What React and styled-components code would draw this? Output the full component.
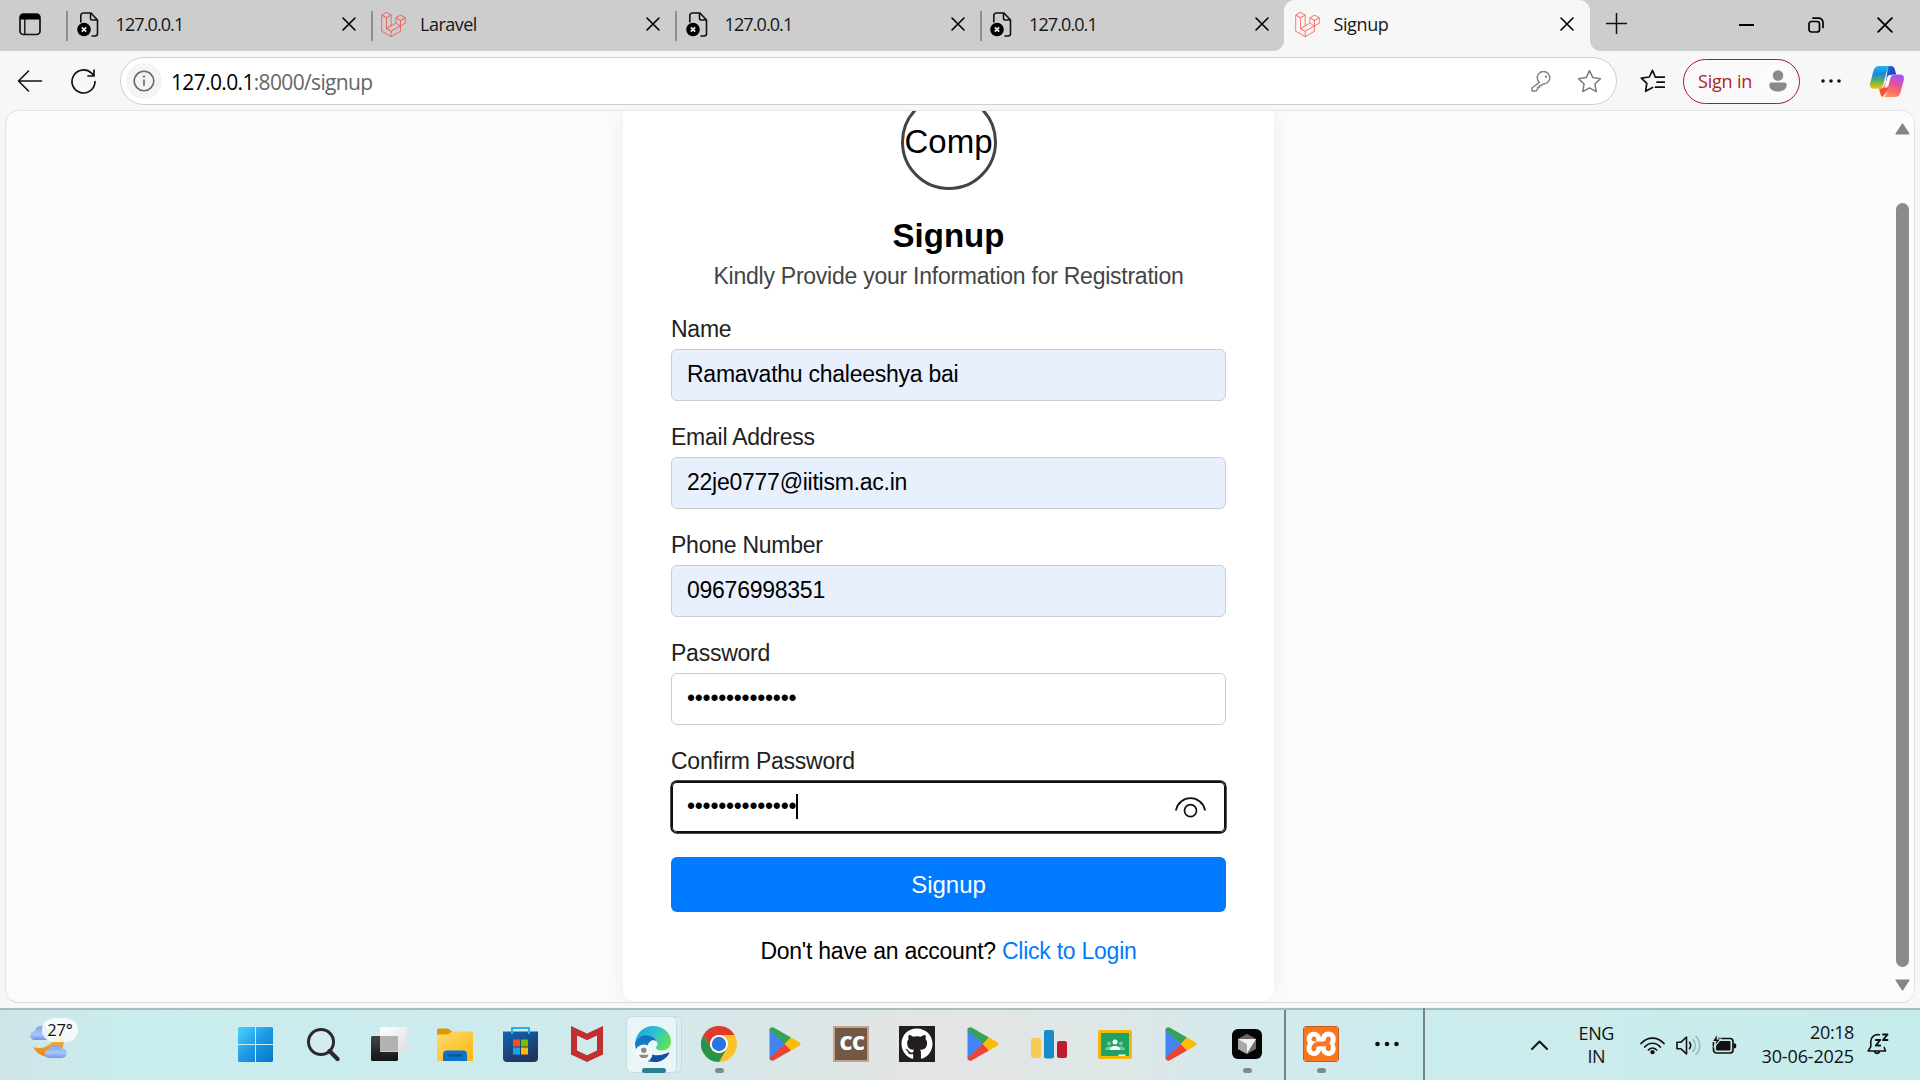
import React from "react";
import styled, { createGlobalStyle, css } from "styled-components";
import { SiLaravel, SiXampp } from "react-icons/si";
import { FaGithub } from "react-icons/fa";

const GlobalStyle = createGlobalStyle`
  *, *::before, *::after { box-sizing: border-box; }
  body { margin: 0; background: #f7f7f7; overflow: hidden; }
  svg { display: block; flex: none; }
`;

const systemFont = css`
  font-family: "Open Sans", "Noto Sans", sans-serif;
`;

const Screen = styled.div`
  width: 1920px;
  height: 1080px;
  display: flex;
  flex-direction: column;
  overflow: hidden;
  ${systemFont}
`;

/* ---------- Tab strip ---------- */

const TabStrip = styled.div`
  height: 51px;
  flex: none;
  display: flex;
  background: #cdcdcd;
`;

const TabActions = styled.div`
  width: 66px;
  padding: 13px 0 0 19px;
`;

const Tab = styled.div`
  width: 304.5px;
  height: 51px;
  display: flex;
  align-items: center;
  padding: 0 15px 3px 10.5px;
  position: relative;
  &::before {
    content: "";
    position: absolute;
    left: 0;
    top: 11px;
    width: 2px;
    height: 30px;
    background: #8f8f8f;
  }
`;

const ActiveTab = styled(Tab)`
  width: 306px;
  background: #f7f7f7;
  border-radius: 11px 11px 0 0;
  padding-right: 16px;
  &::before {
    left: -10px;
    top: 41px;
    width: 10px;
    height: 10px;
    background: radial-gradient(circle at 0 0, #cdcdcd 9.5px, #f7f7f7 10px);
  }
  &::after {
    content: "";
    position: absolute;
    right: -10px;
    top: 41px;
    width: 10px;
    height: 10px;
    background: radial-gradient(circle at 100% 0, #cdcdcd 9.5px, #f7f7f7 10px);
  }
`;

const TabIcon = styled.span`
  width: 26px;
  color: ${(p) => p.$color || "#111"};
`;

const TabTitle = styled.span`
  flex: 1;
  margin-left: 13px;
  font-size: 18px;
  line-height: 24px;
  letter-spacing: ${(p) => p.$spacing || "-0.9px"};
  color: #161616;
`;

const NewTab = styled.div`
  margin-left: 15.5px;
  padding-top: 13px;
`;

const WindowControls = styled.div`
  margin-left: auto;
  margin-right: 1px;
  display: flex;
  align-items: center;
  height: 50px;
`;

const ControlButton = styled.div`
  width: 69px;
  display: flex;
  justify-content: center;
`;

/* ---------- Toolbar ---------- */

const Toolbar = styled.div`
  height: 59px;
  flex: none;
  display: flex;
  align-items: center;
  padding: 1px 0 0 17px;
  background: #f7f7f7;
`;

const ReloadSlot = styled.div`
  margin: 0 24.5px 0 27.5px;
`;

const AddressBar = styled.div`
  width: 1497px;
  height: 48px;
  flex: none;
  display: flex;
  align-items: center;
  padding: 0 14px 0 5px;
  border: 1.5px solid #cecece;
  border-radius: 24px;
  background: #fff;
`;

const SiteInfo = styled.div`
  width: 36px;
  height: 36px;
  border-radius: 50%;
  background: #f4f4f4;
  display: flex;
  align-items: center;
  justify-content: center;
`;

const Url = styled.div`
  flex: 1;
  margin-left: 9px;
  padding-top: 1px;
  font-size: 21px;
  line-height: 28px;
  letter-spacing: -0.65px;
  color: #666;
`;

const UrlHost = styled.span`
  color: #000;
`;

const StarSlot = styled.div`
  margin-left: 25px;
`;

const CollectionsSlot = styled.div`
  margin: 0 18px 0 23px;
`;

const SignIn = styled.div`
  width: 117px;
  height: 45px;
  flex: none;
  display: flex;
  align-items: center;
  padding-left: 14px;
  border: 1.5px solid #a91b22;
  border-radius: 23px;
  background: #f9f9f9;
`;

const SignInText = styled.span`
  width: 63px;
  font-size: 18px;
  line-height: 24px;
  letter-spacing: -0.2px;
  color: #ab1f26;
`;

const Avatar = styled.div`
  width: 34px;
  height: 34px;
  border-radius: 50%;
  background: #fbfbfb;
  display: flex;
  align-items: center;
  justify-content: center;
`;

const MoreSlot = styled.div`
  margin: 0 29px 0 20.5px;
`;

/* ---------- Web page ---------- */

const Frame = styled.div`
  height: 898px;
  flex: none;
  padding: 0 5px 5px 5px;
  background: #f7f7f7;
`;

const Page = styled.div`
  height: 893px;
  display: flex;
  justify-content: space-between;
  overflow: hidden;
  border: 1px solid #e3e4e5;
  border-bottom: 1.5px solid #dadbdc;
  border-radius: 14px;
  background: #fafbfd;
`;

const PageBody = styled.div`
  flex: 1;
  padding-left: 617px;
  display: flex;
`;

const Card = styled.div`
  width: 651px;
  height: 890px;
  padding: 0 48px;
  background: #fff;
  border-radius: 0 0 12px 12px;
  box-shadow: 0 0 22px rgba(0, 0, 0, 0.06);
  display: flex;
  flex-direction: column;
  align-items: stretch;
  font-family: "Liberation Sans", Arial, sans-serif;
  color: #000;
`;

const bodyText = css`
  font-size: 23px;
  line-height: 26px;
  letter-spacing: -0.25px;
`;

const Logo = styled.div`
  align-self: center;
  width: 96px;
  height: 96px;
  margin-top: -17px;
  flex: none;
  border: 3px solid #444;
  border-radius: 50%;
  display: flex;
  align-items: center;
  justify-content: center;
  font-size: 33px;
  line-height: 38px;
`;

const Title = styled.h1`
  margin: 27px 0 0;
  font-size: 33px;
  line-height: 38px;
  font-weight: 700;
  text-align: center;
`;

const Subtitle = styled.p`
  margin: 8px 0 0;
  ${bodyText}
  text-align: center;
  color: #444;
`;

const Field = styled.div`
  display: flex;
  flex-direction: column;
  margin-top: ${(p) => (p.$first ? "27px" : "23px")};
`;

const Label = styled.label`
  ${bodyText}
  margin-bottom: 7px;
  color: #222;
`;

const Input = styled.div`
  height: 52px;
  display: flex;
  align-items: center;
  padding: 0 19px 3px 15px;
  border: 1px solid #ccc;
  border-radius: 6px;
  background: ${(p) => (p.$filled ? "#e8f0fe" : "#fff")};
  ${bodyText}
  ${(p) =>
    p.$focused &&
    css`
      border-color: #101010;
      box-shadow: 0 0 0 0.7px #101010, inset 0 0 0 1px #101010;
    `}
`;

const Caret = styled.span`
  width: 2px;
  height: 25px;
  margin-top: 2px;
  background: #000;
`;

const RevealButton = styled.span`
  margin-left: auto;
  padding-top: 4px;
`;

const SubmitButton = styled.div`
  height: 55px;
  flex: none;
  margin-top: 24px;
  padding-top: 1px;
  display: flex;
  align-items: center;
  justify-content: center;
  border-radius: 6px;
  background: #007bff;
  color: #fff;
  font-size: 24px;
  line-height: 28px;
`;

const Footnote = styled.p`
  margin: 26px 0 0;
  ${bodyText}
  text-align: center;
`;

const LoginLink = styled.a`
  color: #007bff;
`;

const Scrollbar = styled.div`
  width: 23px;
  display: flex;
  flex-direction: column;
  align-items: center;
  padding: 12px 0 0 0;
  background: #fcfcfd;
`;

const Thumb = styled.div`
  width: 13px;
  height: 764px;
  flex: none;
  margin: 68px 0 12px;
  border-radius: 7px;
  background: #8b8b8b;
`;

/* ---------- Taskbar ---------- */

const Taskbar = styled.div`
  height: 72px;
  flex: none;
  display: flex;
  border-top: 2px solid #a9bcbc;
  background: linear-gradient(
    90deg,
    #cfe4e8 0,
    #c9edee 130px,
    #ccebed 480px,
    #d6e8ea 700px,
    #e3e5e3 930px,
    #dfe7e7 1110px,
    #d4e9ec 1230px,
    #cbecee 1420px,
    #cbebed 1600px,
    #c7ecec 1900px
  );
`;

const Weather = styled.div`
  width: 222.5px;
  flex: none;
  padding: 7px 0 0 29px;
  position: relative;
`;

const Temperature = styled.div`
  position: absolute;
  left: 42px;
  top: 8px;
  width: 36px;
  height: 24px;
  border-radius: 12px;
  background: rgba(250, 252, 253, 0.85);
  font-size: 16.5px;
  line-height: 23px;
  letter-spacing: -0.2px;
  text-align: center;
  color: #111;
`;

const Slot = styled.div`
  width: 66.05px;
  height: 70px;
  flex: none;
  display: flex;
  align-items: center;
  justify-content: center;
  padding-bottom: 2px;
  position: relative;
`;

const ActiveSlot = styled(Slot)`
  &::before,
  &::after {
    content: "";
    position: absolute;
    top: 6px;
    height: 57px;
    border: 1px solid #c5dcdf;
    border-radius: 6px;
  }
  &::before {
    left: 21px;
    width: 41px;
    background: #dcecee;
  }
  &::after {
    left: 6px;
    width: 51px;
    background: #e9f5f6;
  }
  svg {
    position: relative;
    z-index: 1;
  }
`;

const Indicator = styled.span`
  position: absolute;
  z-index: 2;
  left: ${(p) => (p.$active ? "22px" : "29px")};
  top: 58px;
  width: ${(p) => (p.$active ? "24px" : "9px")};
  height: 5px;
  border-radius: 3px;
  background: ${(p) => (p.$active ? "#268292" : "#7f8a8b")};
`;

const AppSlots = styled.div`
  display: flex;
  padding-left: 1px;
`;

const Divider = styled.div`
  width: 2px;
  height: 72px;
  flex: none;
  margin: ${(p) => (p.$raised ? "-2px 0 0 3px" : "0 2px 0 4px")};
  background: #778485;
`;

const CodeChef = styled.div`
  width: 36px;
  height: 36px;
  border: 2px solid #c3a48d;
  background: #725845;
  display: flex;
  align-items: center;
  justify-content: center;
  padding: 0 0 2px 2px;
  color: #fff;
  font: 800 20px/24px "Open Sans", sans-serif;
  letter-spacing: -0.5px;
`;

const Tray = styled.div`
  flex: 1;
  display: flex;
  align-items: center;
  padding: 0 31px 0 106px;
  color: #111;
`;

const Language = styled.div`
  width: 40px;
  margin-left: 28px;
  font-size: 18px;
  line-height: 23px;
  letter-spacing: -0.4px;
  text-align: center;
`;

const TrayIcons = styled.div`
  display: flex;
  align-items: center;
  gap: 11px;
  margin-left: 24px;
`;

const Clock = styled.div`
  margin-left: auto;
  margin-right: 13px;
  padding-bottom: 2px;
  display: flex;
  flex-direction: column;
  align-items: flex-end;
  font-size: 18px;
  line-height: 24px;
  letter-spacing: -0.15px;
`;

const ClockTime = styled.span`
  letter-spacing: -0.4px;
`;

/* ---------- Icons ---------- */

const line = { fill: "none", stroke: "currentColor", strokeLinecap: "round", strokeLinejoin: "round" };

const Cross = ({ size = 14, width = 1.6 }) => (
  <svg width={size} height={size} viewBox="0 0 14 14" {...line} strokeWidth={width}>
    <path d="M1 1l12 12M13 1L1 13" />
  </svg>
);

const TabActionsIcon = () => (
  <svg width="22" height="23" viewBox="0 0 22 23">
    <rect x="1" y="1" width="20" height="20.5" rx="3.5" fill="none" stroke="#111" strokeWidth="1.7" />
    <path d="M1 6.500V4.500A3.500 3.500 0 0 1 4.500 1h13A3.500 3.500 0 0 1 21 4.500V6.500z" fill="#000" />
    <path d="M5.800 6v15" stroke="#111" strokeWidth="1.400" />
  </svg>
);

const BrokenPageIcon = () => (
  <svg width="22" height="25" viewBox="0 0 22 25">
    <path d="M3.800 10.500V3.500A2.500 2.500 0 0 1 6.300 1H14l6.500 7v13.500a2.500 2.500 0 0 1-2.500 2.500H14.500M13.500 1v5.500A1.500 1.500 0 0 0 15 8h5.500" fill="none" stroke="#111" strokeWidth="1.600" strokeLinejoin="round" />
    <circle cx="7" cy="17.500" r="6.800" fill="#000" />
    <path d="M4.800 15.300l4.400 4.400M9.200 15.300l-4.400 4.400" stroke="#eee" strokeWidth="1.700" />
  </svg>
);

const PlusIcon = () => (
  <svg width="21" height="21" viewBox="0 0 21 21" fill="none" stroke="#111" strokeWidth="1.500">
    <path d="M10.500 0v21M0 10.500h21" />
  </svg>
);

const RestoreIcon = () => (
  <svg width="16" height="16" viewBox="0 0 16 16" fill="none" stroke="#000" strokeWidth="1.700" strokeLinecap="round">
    <rect x="1" y="4.500" width="10.500" height="10.500" rx="2.500" />
    <path d="M5 1.200h5.500A4.300 4.300 0 0 1 15 5.500V10.500" />
  </svg>
);

const BackIcon = () => (
  <svg width="26" height="22" viewBox="0 0 26 22" {...line} strokeWidth="1.600" color="#111">
    <path d="M11.500 1L1.500 11l10 10M1.500 11H24.500" />
  </svg>
);

const ReloadIcon = () => (
  <svg width="25" height="25" viewBox="0 0 25 25" {...line} strokeWidth="1.700" color="#111">
    <path d="M24 12.500a11.500 11.500 0 1 1-3.500-8.300L23 6.700M23 1v6H17" />
  </svg>
);

const InfoIcon = () => (
  <svg width="22" height="22" viewBox="0 0 22 22" fill="none" stroke="#6a6a6a" strokeWidth="1.600">
    <circle cx="11" cy="11" r="9.800" />
    <path d="M11 9.500v6.500" />
    <circle cx="11" cy="6.700" r="1.100" fill="#6a6a6a" stroke="none" />
  </svg>
);

const KeyIcon = () => (
  <svg width="21" height="21" viewBox="0 0 21 21" {...line} strokeWidth="1.500" color="#858585">
    <path d="M8.300 11.400A6.300 6.300 0 1 1 12 13l-1.500 1.500H8.500v2H6.500v2L5 20H1v-3z" />
    <circle cx="15" cy="5.800" r="1.200" fill="#858585" stroke="none" />
  </svg>
);

const StarIcon = () => (
  <svg width="25" height="24" viewBox="0 0 24 23" {...line} strokeWidth="1.400" color="#7b7b7b">
    <path d="M12 1.500l3.200 6.700 7.300 1-5.300 5.100 1.300 7.300L12 18.100l-6.500 3.500 1.300-7.300L1.500 9.200l7.300-1z" />
  </svg>
);

const CollectionsIcon = () => (
  <svg width="25" height="24" viewBox="0 0 25 24" {...line} strokeWidth="1.700" color="#111">
    <path d="M16 8.300L15.300 8 12.500 1.300 9.300 8l-8 1.100 5.500 5.200-1.200 8 7-3.800M15.500 8.200h9M17 13.200h7.500M15.500 18.200h9" />
  </svg>
);

const PersonIcon = () => (
  <svg width="18" height="22" viewBox="0 0 18 22" fill="#8a8a8a">
    <circle cx="9" cy="5.500" r="5.300" />
    <path d="M2.500 12.500h13a2.200 2.200 0 0 1 2.200 2.200C17.700 19 14 21.500 9 21.500S.3 19 .3 14.700a2.200 2.200 0 0 1 2.200-2.200z" />
  </svg>
);

const DotsIcon = ({ size = 20, r = 1.8 }) => (
  <svg width={size} height="6" viewBox={`0 0 ${size} 6`} fill="#111">
    <circle cx={r + 0.2} cy="3" r={r} />
    <circle cx={size / 2} cy="3" r={r} />
    <circle cx={size - r - 0.2} cy="3" r={r} />
  </svg>
);

const CopilotIcon = () => (
  <svg width="34" height="31" viewBox="0 0 34 31">
    <defs>
      <linearGradient id="cpA" x1="0" y1="0" x2="0" y2="1">
        <stop offset="0" stopColor="#20b6f2" />
        <stop offset=".35" stopColor="#1c87da" />
        <stop offset=".65" stopColor="#5bb45b" />
        <stop offset="1" stopColor="#f4c30b" />
      </linearGradient>
      <linearGradient id="cpB" x1="0.6" y1="0" x2="0.3" y2="1">
        <stop offset="0" stopColor="#a552f4" />
        <stop offset=".4" stopColor="#e0549c" />
        <stop offset=".75" stopColor="#fb6f61" />
        <stop offset="1" stopColor="#ff9a52" />
      </linearGradient>
      <linearGradient id="cpC" x1="0" y1="0" x2="1" y2="1">
        <stop offset="0" stopColor="#1d70de" />
        <stop offset="1" stopColor="#1d2fae" />
      </linearGradient>
    </defs>
    <path d="M18 0h3c2.300 0 3.200 1.500 3.800 3.500L26.300 8.500H24c-3 0-4.500 1-5.300 3.500L16 16z" fill="url(#cpC)" />
    <path d="M12.500 31c-1.500-1-2-2.500-2.500-4.500L9 22.500h1c3 0 4-1.500 4.800-4L18 12v12z" fill="#f2553c" />
    <path d="M9 0H21c-2.300 0-3.200 1.500-3.900 4l-3.600 14c-.7 2.800-2 4.800-4.700 4.800H4c-3.500 0-4.600-2.500-3.700-6L3.500 4.500C4.500 1.500 6.300 0 9 0z" fill="url(#cpA)" />
    <path d="M25 31H12.500c2.300 0 3.200-1.500 3.900-4l3.800-14c.7-2.800 2-4.500 4.700-4.500H30c3.500 0 4.600 2.500 3.700 6L30.500 26.500c-1 3-2.800 4.500-5.500 4.500z" fill="url(#cpB)" />
    <path d="M18.700 9.300h2.800c-1 .8-1.500 2-1.900 3.700l-2.300 8.500h-3c.6-.8.900-2 1.200-3.200l1.500-6c.4-1.500.9-2.400 1.700-3z" fill="#fff" />
  </svg>
);

const EyeIcon = () => (
  <svg width="31" height="21" viewBox="0 0 31 21" {...line} strokeWidth="1.700" color="#111">
    <path d="M1 13C2.500 6 8.500 1.200 15.500 1.200S28.500 6 30 13" />
    <circle cx="15.500" cy="13.700" r="6" />
  </svg>
);

const ArrowIcon = ({ down }) => (
  <svg width="15" height="12" viewBox="0 0 15 12" fill="#858585" stroke="#858585" strokeWidth="1.500" strokeLinejoin="round">
    <path d={down ? "M1.200 1.200h12.600L7.500 10.800z" : "M1.200 10.800h12.600L7.500 1.200z"} />
  </svg>
);

const WeatherIcon = () => (
  <svg width="42" height="44" viewBox="0 0 42 44">
    <defs>
      <linearGradient id="moon" x1="0" y1="0" x2="0" y2="1">
        <stop offset="0" stopColor="#ffd27a" />
        <stop offset=".6" stopColor="#f0a030" />
        <stop offset="1" stopColor="#ee7d1c" />
      </linearGradient>
      <linearGradient id="cloud" x1="0" y1="0" x2="0" y2="1">
        <stop offset="0" stopColor="#7ea5f0" />
        <stop offset=".6" stopColor="#a9c6fa" />
        <stop offset="1" stopColor="#6f97e8" />
      </linearGradient>
    </defs>
    <path d="M28 10c7 5 9 14 5 22-6 9.500-22 11.500-29 -2 12 4 24-4 24-20z" fill="url(#moon)" />
    <path d="M5.500 23a4.300 4.300 0 0 1 0-8.600 7.300 7.300 0 0 1 13.500-2v10.600z" fill="url(#cloud)" />
    <path d="M20 41a4.300 4.300 0 0 1 0-8.600 7.300 7.300 0 0 1 13-1A4.800 4.800 0 0 1 33 41z" fill="url(#cloud)" />
  </svg>
);

const WindowsIcon = () => (
  <svg width="35" height="35" viewBox="0 0 35 35">
    <defs>
      <linearGradient id="win" gradientUnits="userSpaceOnUse" x1="0" y1="0" x2="35" y2="35">
        <stop offset="0" stopColor="#4fd2fd" />
        <stop offset=".5" stopColor="#1d9ae4" />
        <stop offset="1" stopColor="#0474cf" />
      </linearGradient>
    </defs>
    <path fill="url(#win)" d="M1 0h16v17H0V1zM18 0h16l1 1v16H18zM0 18h17v17H1l-1-1zM18 18h17v16l-1 1H18z" />
  </svg>
);

const SearchIcon = () => (
  <svg width="34" height="35" viewBox="0 0 34 35" fill="none" stroke="#2a2b2b">
    <circle cx="15" cy="15" r="12.500" strokeWidth="3" fill="#d6ecf0" />
    <path d="M23.500 24l8 8" strokeWidth="4.200" strokeLinecap="round" />
  </svg>
);

const TaskViewIcon = () => (
  <svg width="36" height="34" viewBox="0 0 36 34">
    <defs>
      <linearGradient id="tvA" x1="0" y1="0" x2="0" y2="1">
        <stop offset="0" stopColor="#454545" />
        <stop offset="1" stopColor="#141414" />
      </linearGradient>
      <linearGradient id="tvB" x1="0" y1="0" x2="1" y2="1">
        <stop offset="0" stopColor="#fff" />
        <stop offset="1" stopColor="#dedede" />
      </linearGradient>
    </defs>
    <rect x="0" y="9" width="27" height="25" rx="1.500" fill="url(#tvA)" />
    <rect x="9" y="0" width="27" height="25" rx="1.500" fill="url(#tvB)" />
    <path d="M9 9h18v15.500H9z" fill="#b2b2b2" />
  </svg>
);

const FolderIcon = () => (
  <svg width="36" height="33" viewBox="0 0 36 33">
    <defs>
      <linearGradient id="fold" x1="0" y1="0" x2="1" y2="1">
        <stop offset="0" stopColor="#ffd970" />
        <stop offset="1" stopColor="#fbb80f" />
      </linearGradient>
    </defs>
    <path d="M0 2a1.500 1.500 0 0 1 1.500-1.500H11L16 4v5H0z" fill="#dc9b04" />
    <path d="M0 6.500h10.500L15 3.500h20a1 1 0 0 1 1 1V32a1 1 0 0 1-1 1H1a1 1 0 0 1-1-1z" fill="url(#fold)" />
    <path d="M6 33V26.500A4 4 0 0 1 10 22.500h16a4 4 0 0 1 4 4V33z" fill="#0d72c9" />
    <path d="M11 27.500h13" stroke="#084f97" strokeWidth="2" strokeLinecap="round" />
  </svg>
);

const StoreIcon = () => (
  <svg width="35" height="35" viewBox="0 0 35 35">
    <defs>
      <linearGradient id="store" x1="0" y1="0" x2="0.500" y2="1">
        <stop offset="0" stopColor="#0f66b4" />
        <stop offset="1" stopColor="#213560" />
      </linearGradient>
    </defs>
    <path d="M0 4.500h35V31a4 4 0 0 1-4 4H4a4 4 0 0 1-4-4z" fill="url(#store)" />
    <path d="M9 7V1h17v6" fill="none" stroke="#1fb6ee" strokeWidth="2" strokeLinejoin="round" />
    <path d="M10 12.500h7v7h-7z" fill="#f25022" />
    <path d="M18 12.500h7v7h-7z" fill="#7fba00" />
    <path d="M10 20.500h7v7h-7z" fill="#12a5ee" />
    <path d="M18 20.500h7v7h-7z" fill="#ffb902" />
  </svg>
);

const McAfeeIcon = () => (
  <svg width="32" height="36" viewBox="0 0 32 36">
    <path fill="#c22f30" fillRule="evenodd" d="M0 0l16 7.500L32 0v28.500L16 36 0 28.500zM6 9.500v15l10 4.700 10-4.700v-15L16 14.300z" />
  </svg>
);

const EdgeIcon = () => (
  <svg width="36" height="36" viewBox="0 0 36 36">
    <defs>
      <linearGradient id="edA" x1="0" y1="0.200" x2="1" y2="0.600">
        <stop offset="0" stopColor="#1aa5dc" />
        <stop offset=".5" stopColor="#2bc3d2" />
        <stop offset="1" stopColor="#62e350" />
      </linearGradient>
      <linearGradient id="edB" x1="0" y1="0" x2="0" y2="1">
        <stop offset="0" stopColor="#1473bd" />
        <stop offset="1" stopColor="#168ad8" />
      </linearGradient>
    </defs>
    <path d="M0 17C1 7 9 0 18 0c10 0 18 7 18 15.500 0 5.500-4 9-9 9-4 0-6-1.300-6-2.700 0-1.200 1.500-1.800 1.500-4.300C22.500 12 16 9 10.500 9 6 9 2 12 0 17z" fill="url(#edA)" />
    <path d="M0 17c2-5 6-8 10.500-8 6 0 11 3.500 12 7.500-1-1.800-3-2.500-4.500-2.300-4 .5-6 4.500-5.200 9 1 6 5.200 11 11.200 11-2 1.300-4 1.800-6 1.800C8 36 0 28 0 17z" fill="url(#edB)" />
    <path d="M12.800 23.200c1.500 4.500 5.500 6.300 10 6 4-.2 7.500-1.400 10.700-2.700.8-.2 1 .5.500 1.200-3 5-8 8.300-14 8.300-5 0-8.500-5-7.200-12.800z" fill="#10509c" />
    <circle cx="8.800" cy="27.200" r="8.800" fill="#f6f7f7" />
    <circle cx="8.800" cy="24.300" r="2.700" fill="#8b8b8b" />
    <path d="M4.200 28.700h9.200c0 2.300-2 3.400-4.600 3.400s-4.600-1.100-4.600-3.400z" fill="#8b8b8b" />
  </svg>
);

const ChromeIcon = () => (
  <svg width="36" height="36" viewBox="0 0 36 36">
    <circle cx="18" cy="18" r="18" fill="#fbc22b" />
    <path d="M2.400 9A18 18 0 0 1 33.600 9H18a9 9 0 0 0-7.800 13.500z" fill="#de3b30" />
    <path d="M2.400 9l7.800 13.500A9 9 0 0 0 25.800 22.500L18 36A18 18 0 0 1 2.400 9z" fill="#27944a" />
    <circle cx="18" cy="18" r="9" fill="#fff" />
    <circle cx="18" cy="18" r="7.200" fill="#2b74e8" />
  </svg>
);

const PlayIcon = () => (
  <svg width="32" height="34" viewBox="0 0 32 34">
    <path d="M0.500 2v30l16-15z" fill="#4384f4" />
    <path d="M0.500 3C.800.500 3 -.400 5 .800L22 10.500 16 17z" fill="#34a353" />
    <path d="M0.500 31c.300 2.500 2.500 3.400 4.500 2.200L22 23.500 16 17z" fill="#ea4435" />
    <path d="M22 10.500l8.300 4.700c1.600 1 1.600 2.600 0 3.600L22 23.500 16 17z" fill="#fbbc06" />
  </svg>
);

const GithubTile = styled.div`
  width: 36px;
  height: 36px;
  display: flex;
  align-items: center;
  justify-content: center;
  background: #221e1f;
  color: #fff;
`;

const BarsIcon = () => (
  <svg width="36" height="30" viewBox="0 0 36 30">
    <rect x="0" y="9" width="10" height="20" rx="2" fill="#f9cb52" />
    <rect x="13" y="1" width="10" height="28.500" rx="2" fill="#178ccd" />
    <rect x="26" y="12" width="10" height="17" rx="2" fill="#be1e2b" />
  </svg>
);

const ClassroomIcon = () => (
  <svg width="34" height="29" viewBox="0 0 34 29">
    <rect width="34" height="29" rx="2" fill="#f4b70c" />
    <rect x="3" y="3" width="28" height="23" fill="#1ea362" />
    <g fill="#79c8a0">
      <circle cx="11" cy="13.500" r="2" />
      <circle cx="23" cy="13.500" r="2" />
      <path d="M7 20c0-2.500 2-3.500 4-3.500h12c2 0 4 1 4 3.500z" />
    </g>
    <circle cx="17" cy="12" r="2.500" fill="#fff" />
    <path d="M11.800 20c0-3 2.800-4 5.200-4s5.200 1 5.200 4z" fill="#fff" />
    <path d="M20.500 24.500h7V26h-7z" fill="#fff" />
  </svg>
);

const CursorIcon = () => (
  <svg width="30" height="30" viewBox="0 0 30 30">
    <rect width="30" height="30" rx="6" fill="#050505" />
    <path d="M15 5l9 5v10l-9 5-9-5V10z" fill="#6f6f6f" />
    <path d="M15 5l9 5H6z" fill="#666" />
    <path d="M6 10l9 5.500V25l-9-5z" fill="#a8a8a8" />
    <path d="M6 10h18l-9 14.500v-9z" fill="#f2f2f2" />
  </svg>
);

const XamppTile = styled.div`
  width: 36px;
  height: 36px;
  display: flex;
  align-items: center;
  justify-content: center;
  overflow: hidden;
  border: 1px solid #c25d22;
  border-radius: 3px;
  background: #fff;
  color: #f8761f;
`;

const ChevronIcon = () => (
  <svg width="17" height="10" viewBox="0 0 17 10" {...line} strokeWidth="2">
    <path d="M1 9l7.500-7.500L16 9" />
  </svg>
);

const WifiIcon = () => (
  <svg width="25" height="19" viewBox="0 0 25 19" {...line} strokeWidth="1.700">
    <path d="M1 7.500c6.500-7.300 16.500-7.300 23 0M4.700 11c4.500-5 11.100-5 15.600 0M8.400 14c2.500-2.700 5.700-2.700 8.200 0" />
    <circle cx="12.500" cy="16.200" r="2.100" fill="currentColor" stroke="none" />
  </svg>
);

const SpeakerIcon = () => (
  <svg width="25" height="21" viewBox="0 0 25 21" {...line} strokeWidth="1.600">
    <path d="M1 7.200h4L10.500 2v17L5 13.800H1zM13.500 7.300c1.500 2 1.500 4.400 0 6.400" />
    <path d="M16.800 4.500c3.500 3.700 3.500 8.300 0 12M20 1.500c5 5.300 5 12.700 0 18" stroke="#9db9bb" />
  </svg>
);

const BatteryIcon = () => (
  <svg width="25" height="26" viewBox="0 -3 25 26">
    <rect x="1.500" y="3.500" width="19.500" height="14.500" rx="3" fill="none" stroke="#111" strokeWidth="1.700" />
    <rect x="4" y="6" width="14.500" height="9.500" rx="1" fill="#111" />
    <path d="M21.500 8.500h1.500a1.200 1.200 0 0 1 1.200 1.200v2.300a1.200 1.200 0 0 1-1.200 1.200h-1.500z" fill="#111" />
    <path d="M5.500-2L.3 6.500h3.400L2 12.500l6.800-8.500H5.300z" fill="#111" stroke="#c9ecee" strokeWidth="1.200" />
  </svg>
);

const BellIcon = () => (
  <svg width="22" height="24" viewBox="0 0 22 24" {...line} strokeWidth="1.600">
    <path d="M12.500 1.800C7 .8 3.800 4.500 3.800 8.500v5.200L1.200 18h17.300l-1.300-3.500M7.500 18.300c.7 2.700 4.500 2.700 5.200 0" />
    <path d="M8.800 7h4.400l-4.400 5.500h4.400M16 1.500h4.500L16 7h4.500" strokeWidth="1.900" />
  </svg>
);

/* ---------- Composition ---------- */

const tabs = [
  { title: "127.0.0.1" },
  { title: "Laravel", laravel: true },
  { title: "127.0.0.1" },
  { title: "127.0.0.1" },
];

const dots = "••••••••••••••";

const fields = [
  { label: "Name", value: "Ramavathu chaleeshya bai", filled: true },
  { label: "Email Address", value: "22je0777@iitism.ac.in", filled: true },
  { label: "Phone Number", value: "09676998351", filled: true },
  { label: "Password", value: dots },
  { label: "Confirm Password", value: dots, focused: true },
];

export default function App() {
  return (
    <Screen>
      <GlobalStyle />
      <TabStrip>
        <TabActions><TabActionsIcon /></TabActions>
        {tabs.map((tab, i) => (
          <Tab key={i}>
            <TabIcon $color="#f4544b">{tab.laravel ? <SiLaravel size={25} /> : <BrokenPageIcon />}</TabIcon>
            <TabTitle $spacing={tab.laravel ? "-0.5px" : undefined}>{tab.title}</TabTitle>
            <Cross />
          </Tab>
        ))}
        <ActiveTab>
          <TabIcon $color="#fb5a50"><SiLaravel size={25} /></TabIcon>
          <TabTitle $spacing="-0.4px">Signup</TabTitle>
          <Cross />
        </ActiveTab>
        <NewTab><PlusIcon /></NewTab>
        <WindowControls>
          <ControlButton>
            <svg width="15" height="2" viewBox="0 0 15 2"><path d="M0 1h15" stroke="#000" strokeWidth="2" /></svg>
          </ControlButton>
          <ControlButton><RestoreIcon /></ControlButton>
          <ControlButton><Cross size={16} width={1.6} /></ControlButton>
        </WindowControls>
      </TabStrip>

      <Toolbar>
        <BackIcon />
        <ReloadSlot><ReloadIcon /></ReloadSlot>
        <AddressBar>
          <SiteInfo><InfoIcon /></SiteInfo>
          <Url><UrlHost>127.0.0.1</UrlHost>:8000/signup</Url>
          <KeyIcon />
          <StarSlot><StarIcon /></StarSlot>
        </AddressBar>
        <CollectionsSlot><CollectionsIcon /></CollectionsSlot>
        <SignIn>
          <SignInText>Sign in</SignInText>
          <Avatar><PersonIcon /></Avatar>
        </SignIn>
        <MoreSlot><DotsIcon /></MoreSlot>
        <CopilotIcon />
      </Toolbar>

      <Frame>
        <Page>
          <PageBody>
            <Card>
              <Logo>Comp</Logo>
              <Title>Signup</Title>
              <Subtitle>Kindly Provide your Information for Registration</Subtitle>
              {fields.map((f, i) => (
                <Field key={f.label} $first={i === 0}>
                  <Label>{f.label}</Label>
                  <Input $filled={f.filled} $focused={f.focused}>
                    {f.value}
                    {f.focused && <Caret />}
                    {f.focused && <RevealButton><EyeIcon /></RevealButton>}
                  </Input>
                </Field>
              ))}
              <SubmitButton>Signup</SubmitButton>
              <Footnote>Don't have an account? <LoginLink>Click to Login</LoginLink></Footnote>
            </Card>
          </PageBody>
          <Scrollbar>
            <ArrowIcon />
            <Thumb />
            <ArrowIcon down />
          </Scrollbar>
        </Page>
      </Frame>

      <Taskbar>
        <Weather>
          <WeatherIcon />
          <Temperature>27°</Temperature>
        </Weather>
        <Slot><WindowsIcon /></Slot>
        <AppSlots>
          <Slot><SearchIcon /></Slot>
          <Slot><TaskViewIcon /></Slot>
          <Slot><FolderIcon /></Slot>
          <Slot><StoreIcon /></Slot>
          <Slot><McAfeeIcon /></Slot>
          <ActiveSlot><EdgeIcon /><Indicator $active /></ActiveSlot>
          <Slot><ChromeIcon /><Indicator /></Slot>
          <Slot><PlayIcon /></Slot>
          <Slot><CodeChef>CC</CodeChef></Slot>
          <Slot><GithubTile><FaGithub size={32} /></GithubTile></Slot>
          <Slot><PlayIcon /></Slot>
          <Slot><BarsIcon /></Slot>
          <Slot><ClassroomIcon /></Slot>
          <Slot><PlayIcon /></Slot>
          <Slot><CursorIcon /><Indicator /></Slot>
        </AppSlots>
        <Divider />
        <Slot><XamppTile><SiXampp size={40} /></XamppTile><Indicator /></Slot>
        <Slot><DotsIcon size={24} r={2.3} /></Slot>
        <Divider $raised />
        <Tray>
          <ChevronIcon />
          <Language>ENG<br />IN</Language>
          <TrayIcons>
            <WifiIcon />
            <SpeakerIcon />
            <BatteryIcon />
          </TrayIcons>
          <Clock><ClockTime>20:18</ClockTime>30-06-2025</Clock>
          <BellIcon />
        </Tray>
      </Taskbar>
    </Screen>
  );
}
